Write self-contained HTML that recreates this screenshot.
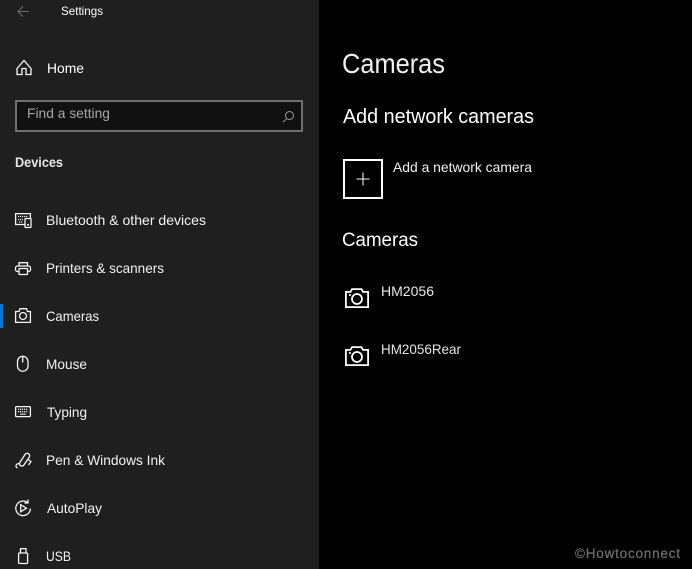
<!DOCTYPE html>
<html><head><meta charset="utf-8"><style>
html,body{margin:0;padding:0;background:#000;width:692px;height:569px;overflow:hidden}
svg{display:block}
text{font-family:"Liberation Sans",sans-serif;fill:#fff}
.ic{fill:none;stroke:#f5f5f5;stroke-width:1.3}
</style></head><body>
<svg width="692" height="569" viewBox="0 0 692 569" xmlns="http://www.w3.org/2000/svg">
<rect width="692" height="569" fill="#000"/>
<rect width="319" height="569" fill="#1f1f1f"/>
<path d="M29 11.500H18M23 6.500l-5 5 5 5" fill="none" stroke="#6a6a6a" stroke-width="1.100"/>
<text x="61" y="15" font-size="12" textLength="42" lengthAdjust="spacingAndGlyphs">Settings</text>
<path class="ic" d="M17 68.500L24 60.500l7 8V74.500h-5V68.500h-4V74.500h-5z"/>
<text x="47" y="73" font-size="14" textLength="37" lengthAdjust="spacingAndGlyphs">Home</text>
<rect x="16" y="101" width="286" height="30" fill="#111" stroke="#707070" stroke-width="2"/>
<text x="27" y="118" font-size="14" style="fill:#a6a6a6" textLength="83" lengthAdjust="spacingAndGlyphs">Find a setting</text>
<circle cx="289.500" cy="115.500" r="4" fill="none" stroke="#999" stroke-width="1"/><path d="M286.500 119l-3.500 3" stroke="#999" stroke-width="1"/>
<text x="15" y="167" font-size="14" font-weight="bold" style="fill:#e8e8e8" textLength="48" lengthAdjust="spacingAndGlyphs">Devices</text>

<path class="ic" d="M25 224.500H15.600V213.600H30.400V218"/><rect class="ic" x="25" y="218.500" width="6" height="9" rx=".5"/>
<path d="M18 216.500h10M18 219.500h5M19 222h4" stroke="#e5e5e5" stroke-width="1.300" stroke-dasharray="1.200 .8"/><circle cx="28" cy="224.800" r="1.100" fill="#eee"/>
<text x="46" y="225" font-size="14" style="fill:#f2f2f2" textLength="160" lengthAdjust="spacingAndGlyphs">Bluetooth &amp; other devices</text>

<path class="ic" d="M19 266V262.700H27.500V266M19 271.500H17.500a2 2 0 0 1-2-2V268a2 2 0 0 1 2-2H28.500a2 2 0 0 1 2 2V269.500a2 2 0 0 1-2 2H27.500"/><rect class="ic" x="19" y="268.500" width="8.500" height="6" rx=".5"/>
<text x="46" y="273" font-size="14" style="fill:#f2f2f2" textLength="118" lengthAdjust="spacingAndGlyphs">Printers &amp; scanners</text>

<rect x="0" y="304" width="3" height="24" fill="#0078d7"/>
<path class="ic" d="M15.600 311.500H19L20 308.700H26.500L27.500 311.500H30.400V322.400H15.600z"/><circle class="ic" cx="23" cy="316" r="3.500"/>
<text x="46" y="321" font-size="14" style="fill:#f2f2f2" textLength="53" lengthAdjust="spacingAndGlyphs">Cameras</text>

<path class="ic" d="M17.500 361.500a5.250 5.250 0 0 1 10.500 0V366a5.250 5.250 0 0 1-10.500 0zM22.700 356.500v6"/>
<text x="46" y="369" font-size="14" style="fill:#f2f2f2" textLength="41" lengthAdjust="spacingAndGlyphs">Mouse</text>

<rect class="ic" x="15.600" y="406.600" width="14.800" height="10" rx="1"/>
<path d="M18 409.300h10M18 411.700h10" stroke="#e5e5e5" stroke-width="1.300" stroke-dasharray="1.200 .8"/><path d="M20 414.200h6" stroke="#e5e5e5" stroke-width="1.100"/>
<text x="47" y="417" font-size="14" style="fill:#f2f2f2" textLength="40" lengthAdjust="spacingAndGlyphs">Typing</text>

<path class="ic" d="M19.500 463L25 454.500a2.500 2.500 0 0 1 4.300 2.600L23.500 465.500a2.500 2.500 0 0 1-4-2.500zM27.500 459L31 461.500L28.500 465M19.500 464a2.300 2.300 0 0 0-3.500 1.800 1.800 1.800 0 0 0 1.500 2"/>
<text x="46" y="465" font-size="14" style="fill:#f2f2f2" textLength="119" lengthAdjust="spacingAndGlyphs">Pen &amp; Windows Ink</text>

<path class="ic" d="M27.500 502.500A7.300 7.300 0 1 0 30.400 508.500M28 499.500v3.500h-3.600"/><path class="ic" d="M20.700 504.700l5.800 3.500-5.800 3.500z"/>
<text x="47" y="513" font-size="14" style="fill:#f2f2f2" textLength="55" lengthAdjust="spacingAndGlyphs">AutoPlay</text>

<path class="ic" d="M20.500 553V548.600H26V553"/><rect class="ic" x="18.600" y="553" width="9" height="10.500" rx="1"/>
<text x="46" y="561" font-size="14" style="fill:#f2f2f2" textLength="25" lengthAdjust="spacingAndGlyphs">USB</text>

<text x="342" y="73" font-size="28" style="fill:#f0f0f0" textLength="103" lengthAdjust="spacingAndGlyphs">Cameras</text>
<text x="343" y="123" font-size="20" textLength="191" lengthAdjust="spacingAndGlyphs">Add network cameras</text>
<rect x="344" y="160" width="38" height="38" fill="none" stroke="#fff" stroke-width="2"/>
<path d="M363 172.500v13M356.500 179h13" stroke="#fff" stroke-width="1"/>
<text x="393" y="172" font-size="14" style="fill:#f0f0f0" textLength="139" lengthAdjust="spacingAndGlyphs">Add a network camera</text>
<text x="342" y="246" font-size="19" textLength="76" lengthAdjust="spacingAndGlyphs">Cameras</text>

<g fill="none" stroke="#fff" stroke-width="1.800">
<path d="M345.900 291.900H350.500L352 289.100H361.500L363 291.900H368.100V307.100H345.900z"/><circle cx="357" cy="299" r="5"/><path d="M349 295h1.800"/>
<path d="M345.900 349.900H350.500L352 347.100H361.500L363 349.900H368.100V365.100H345.900z"/><circle cx="357" cy="357" r="5"/><path d="M349 353h1.800"/>
</g>
<text x="381" y="296" font-size="14" style="fill:#e6e6e6" textLength="53" lengthAdjust="spacingAndGlyphs">HM2056</text>
<text x="381" y="354" font-size="14" style="fill:#e6e6e6" textLength="80" lengthAdjust="spacingAndGlyphs">HM2056Rear</text>

<text x="575" y="558" font-size="13.500" style="fill:#6e6e6e;stroke:#6e6e6e;stroke-width:.25" textLength="105" lengthAdjust="spacing">©Howtoconnect</text>
</svg>
</body></html>
